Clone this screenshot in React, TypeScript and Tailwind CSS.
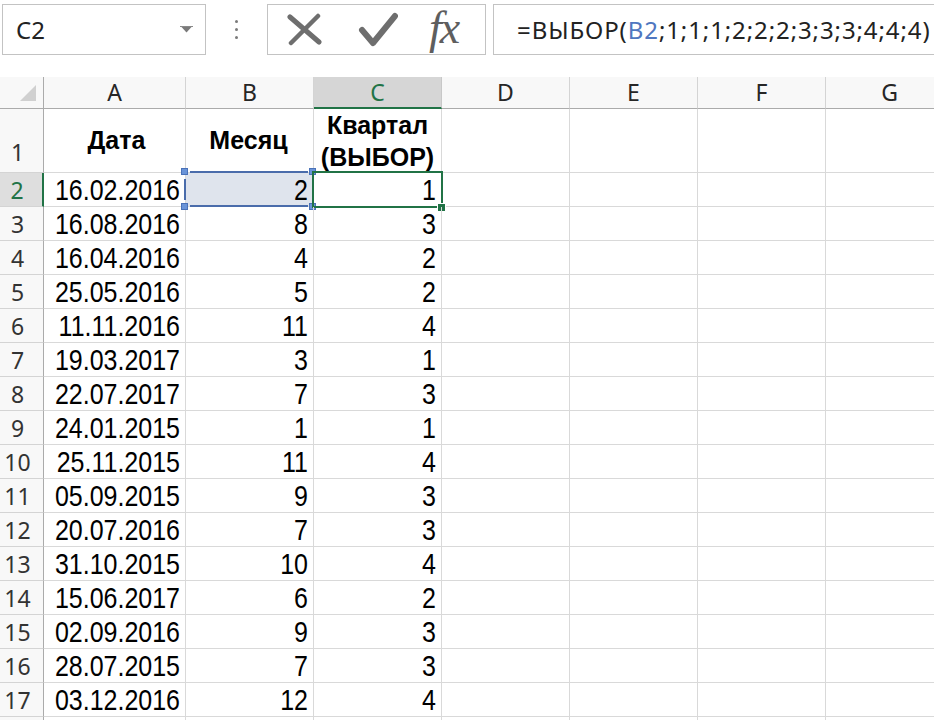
import React from "react";

const rows: [string, number, number][] = [
  ["16.02.2016", 2, 1],
  ["16.08.2016", 8, 3],
  ["16.04.2016", 4, 2],
  ["25.05.2016", 5, 2],
  ["11.11.2016", 11, 4],
  ["19.03.2017", 3, 1],
  ["22.07.2017", 7, 3],
  ["24.01.2015", 1, 1],
  ["25.11.2015", 11, 4],
  ["05.09.2015", 9, 3],
  ["20.07.2016", 7, 3],
  ["31.10.2015", 10, 4],
  ["15.06.2017", 6, 2],
  ["02.09.2016", 9, 3],
  ["28.07.2015", 7, 3],
  ["03.12.2016", 12, 4],
];

const ui = "font-['Noto_Sans','Open_Sans',sans-serif]";
const cellText = "inline-block origin-bottom scale-y-[1.2] leading-none";

function Toolbar() {
  return (
    <div className={`flex h-[77px] pt-[4px] bg-white ${ui}`}>
      {/* Name box */}
      <div className="ml-[2px] w-[204px] h-[51px] shrink-0 border border-[#c3c3c3] flex items-center justify-between pl-[13px] pr-[12px]">
        <span className="text-[24px] text-[#222] leading-none">C2</span>
        <svg width="13" height="7" viewBox="0 0 13 7">
          <path d="M0 0.5 H13" stroke="#8a8a8a" strokeWidth="1" />
          <path d="M1.5 1 L11.5 1 L6.5 6.5 Z" fill="#7a7a7a" />
        </svg>
      </div>

      {/* Dots */}
      <div className="w-[61px] h-[51px] shrink-0 flex flex-col items-center justify-center gap-[5px]">
        <span className="w-[3px] h-[3px] rounded-full bg-[#7a7a7a]" />
        <span className="w-[3px] h-[3px] rounded-full bg-[#7a7a7a]" />
        <span className="w-[3px] h-[3px] rounded-full bg-[#7a7a7a]" />
      </div>

      {/* Cancel / enter / fx */}
      <div className="w-[219px] h-[51px] shrink-0 border border-[#c3c3c3] flex items-center pl-[19px]">
        <svg width="35" height="33" viewBox="0 0 35 33">
          <path d="M3 4 L32 29" stroke="#6e6e6e" strokeWidth="5" strokeLinecap="round" />
          <path d="M31 3 L4 30" stroke="#6e6e6e" strokeWidth="4.5" strokeLinecap="round" />
        </svg>
        <svg width="40" height="36" viewBox="0 0 40 36" className="ml-[36px]">
          <path d="M4 18 L15 31 L37 4" fill="none" stroke="#6e6e6e" strokeWidth="6" strokeLinecap="round" strokeLinejoin="round" />
        </svg>
        <span className="ml-[31px] italic text-[46px] leading-none text-[#5e5e5e] font-['Liberation_Serif',serif] tracking-[-2px] pb-[4px]">
          fx
        </span>
      </div>

      {/* Formula bar */}
      <div className="ml-[7px] flex-1 h-[51px] border border-r-0 border-[#c3c3c3] flex items-center pl-[23px] whitespace-nowrap overflow-hidden">
        <span className="text-[24px] leading-none text-[#222] tracking-[0.9px]">
          =ВЫБОР(<span className="text-[#4f77c0]">B2</span>;1;1;1;2;2;2;3;3;3;4;4;4)
        </span>
      </div>
    </div>
  );
}

const letters = ["A", "B", "C", "D", "E", "F", "G"];
const widths = ["w-[142px]", "w-[128px]", "w-[128px]", "w-[128px]", "w-[128px]", "w-[128px]", "w-[128px]"];

function HeaderRow() {
  return (
    <div className={`flex h-[32px] ${ui}`}>
      <div className="w-[44px] shrink-0 border-r border-b border-[#ababab] bg-[#f8f8f8] flex items-end justify-end pr-[7px] pb-[7px]">
        <svg width="16" height="16" viewBox="0 0 16 16">
          <path d="M16 0 L16 16 L0 16 Z" fill="#d0d0d0" />
        </svg>
      </div>
      {letters.map((l, i) =>
        l === "C" ? (
          <div
            key={l}
            className={`${widths[i]} shrink-0 border-r border-r-[#c8c8c8] border-b-2 border-b-[#217346] bg-[#d6d6d6] flex items-center justify-center text-[23px] text-[#217346]`}
          >
            {l}
          </div>
        ) : (
          <div
            key={l}
            className={`${widths[i]} shrink-0 border-r border-r-[#d4d4d4] border-b border-b-[#ababab] bg-[#f8f8f8] flex items-center justify-center text-[23px] text-[#262626]`}
          >
            {l}
          </div>
        )
      )}
    </div>
  );
}

function RowHead({ n, active, tall }: { n: number; active?: boolean; tall?: boolean }) {
  return (
    <div
      className={`w-[44px] shrink-0 border-b border-b-[#d4d4d4] flex justify-center pr-[8px] text-[23px] leading-none font-normal ${ui} ${
        tall ? "items-end pb-[8px]" : "items-center pt-[1px]"
      } ${
        active
          ? "border-r-2 border-r-[#217346] bg-[#dedede] text-[#217346]"
          : "border-r border-r-[#ababab] bg-[#f8f8f8] text-[#333]"
      }`}
    >
      {n}
    </div>
  );
}

function EmptyCells() {
  return (
    <>
      {[3, 4, 5, 6].map((i) => (
        <div key={i} className={`${widths[i]} shrink-0 border-r border-b border-[#d9d9d9]`} />
      ))}
    </>
  );
}

function Handle({ className }: { className: string }) {
  return <span className={`absolute w-[7px] h-[7px] bg-[#6a94d8] border border-[#4a72b8] ${className}`} />;
}

export default function App() {
  return (
    <div className="w-[934px] h-[720px] overflow-hidden bg-white text-black">
      <Toolbar />
      <HeaderRow />

      {/* Row 1: titles */}
      <div className="flex h-[64px] font-['Liberation_Sans',Arial,sans-serif] text-[25px]">
        <RowHead n={1} tall />
        <div className="w-[142px] shrink-0 border-r border-b border-[#d9d9d9] flex items-center justify-center pl-[4px] font-bold">
          Дата
        </div>
        <div className="w-[128px] shrink-0 border-r border-b border-[#d9d9d9] flex items-center justify-center pr-[2px] font-bold">
          Месяц
        </div>
        <div className="w-[128px] shrink-0 border-r border-b border-[#d9d9d9] flex items-center justify-center text-center leading-[32px] font-bold">
          Квартал
          <br />
          (ВЫБОР)
        </div>
        <EmptyCells />
      </div>

      {rows.map(([date, month, q], idx) => {
        const n = idx + 2;
        const first = n === 2;
        return (
          <div key={n} className="flex h-[34px] font-['Liberation_Sans',Arial,sans-serif] text-[25px]">
            <RowHead n={n} active={first} />
            <div className="w-[142px] shrink-0 border-r border-b border-[#d9d9d9] flex items-end justify-end pr-[5px] pb-[1px]">
              <span className={cellText}>{date}</span>
            </div>
            <div
              className={`relative w-[128px] shrink-0 border-r border-b border-[#d9d9d9] flex items-end justify-end pr-[5px] pb-[1px] ${
                first ? "bg-[#dfe4ed]" : ""
              }`}
            >
              <span className={cellText}>{month}</span>
              {first && (
                <>
                  <span className="absolute left-[4px] top-[-2px] w-[118px] h-[2px] bg-[#4a6cab]" />
                  <span className="absolute left-[4px] top-[32px] w-[118px] h-[2px] bg-[#4a6cab]" />
                  <span className="absolute left-[-2px] top-[6px] w-[2px] h-[21px] bg-[#4a6cab]" />
                  <Handle className="left-[-5px] top-[-5px]" />
                  <Handle className="left-[123px] top-[-5px]" />
                  <Handle className="left-[-5px] top-[30px]" />
                  <Handle className="left-[123px] top-[30px]" />
                </>
              )}
            </div>
            <div className="relative w-[128px] shrink-0 border-r border-b border-[#d9d9d9] flex items-end justify-end pr-[5px] pb-[1px]">
              <span className={cellText}>{q}</span>
              {first && (
                <>
                  <span className="absolute left-[-2px] top-[-2px] w-[131px] h-[37px] border-2 border-[#217346]" />
                  <span className="absolute left-[123px] top-[30px] w-[9px] h-[9px] bg-[#217346] border border-white" />
                </>
              )}
            </div>
            <EmptyCells />
          </div>
        );
      })}
      <div className="flex h-[34px]">
        <div className="w-[44px] shrink-0 border-r border-[#ababab] bg-[#f8f8f8]" />
        <div className="w-[142px] shrink-0 border-r border-[#d9d9d9]" />
        <div className="w-[128px] shrink-0 border-r border-[#d9d9d9]" />
        <div className="w-[128px] shrink-0 border-r border-[#d9d9d9]" />
        <EmptyCells />
      </div>
    </div>
  );
}
